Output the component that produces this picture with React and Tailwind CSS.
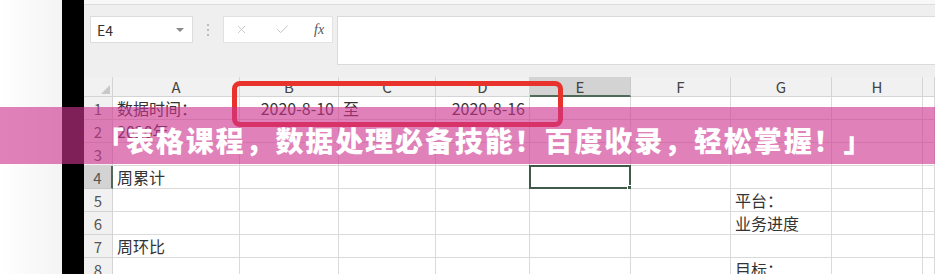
import React from "react";
import { X, Check } from "lucide-react";

const cols = ["A", "B", "C", "D", "E", "F", "G", "H", ""];

const data = {
  1: { A: "数据时间：", B: "2020-8-10", C: "至", D: "2020-8-16" },
  2: { A: "2020年" },
  4: { A: "周累计" },
  5: { G: "平台：" },
  6: { G: "业务进度" },
  7: { A: "周环比" },
  8: { G: "目标：" },
};

const rightAligned = { B: true, D: true };

export default function App() {
  const rows = [1, 2, 3, 4, 5, 6, 7, 8];
  return (
    <div
      className="relative w-[935px] h-[274px] overflow-hidden flex bg-white"
      style={{ fontFamily: '"Noto Sans CJK SC", "Noto Sans", sans-serif' }}
    >
      <div className="w-[62px] shrink-0 bg-linear-to-r from-white to-[#f4f4f4]" />
      <div className="w-[22px] shrink-0 bg-black" />
      <div className="flex-1 flex flex-col bg-[#efefef] min-w-0">
        <div className="h-[5px] shrink-0 bg-[#f8f8f8] border-b border-[#dddddd]" />
        <div className="h-[72px] shrink-0 flex items-start pt-[11px] pl-[6px]">
          <div className="w-[103px] h-[27px] bg-white border border-[#dcdcdc] flex items-center justify-between pl-[6px] pr-[8px]">
            <span className="text-[14px] text-[#333] leading-none">E4</span>
            <span className="w-0 h-0 border-l-[4px] border-r-[4px] border-t-[4px] border-l-transparent border-r-transparent border-t-[#8a8a8a]" />
          </div>
          <div className="ml-[14px] mt-[8px] flex flex-col gap-[3px]">
            <span className="w-[2px] h-[2px] bg-[#bbbbbb]" />
            <span className="w-[2px] h-[2px] bg-[#bbbbbb]" />
            <span className="w-[2px] h-[2px] bg-[#bbbbbb]" />
          </div>
          <div className="ml-[14px] w-[110px] h-[27px] bg-white border border-[#e2e2e2] flex items-center pl-[11px]">
            <X size={13} strokeWidth={1.6} color="#c4c4c4" />
            <Check size={15} strokeWidth={1.6} color="#c4c4c4" className="ml-[27px]" />
            <span
              className="ml-[24px] text-[14px] italic text-[#555]"
              style={{ fontFamily: '"Liberation Serif", serif' }}
            >
              fx
            </span>
          </div>
          <div className="ml-[4px] flex-1 h-[49px] bg-white border border-[#dadada] border-r-0" />
        </div>
        <div className="grid grid-cols-[29px_127px_99px_97px_94px_101px_100px_101px_91px_1fr] grid-rows-[20px_repeat(8,23px)]">
          <div className="bg-[#f1f1f1] border-r border-b border-[#d4d4d4] flex items-end justify-end pr-[2px] pb-[2px]">
            <span className="w-0 h-0 border-l-[9px] border-b-[9px] border-l-transparent border-b-[#c8c8c8]" />
          </div>
          {cols.map((c, i) => (
            <div
              key={"h" + i}
              className={
                c === "E"
                  ? "bg-[#d3d3d3] border-r border-[#c8c8c8] border-b-2 border-b-[#4f6b58] flex items-center justify-center text-[15px] text-[#444] leading-none"
                  : "bg-[#f1f1f1] border-r border-b border-[#d4d4d4] flex items-center justify-center text-[15px] text-[#444] leading-none"
              }
            >
              {c}
            </div>
          ))}
          {rows.map((r) => (
            <React.Fragment key={r}>
              <div
                className={
                  r === 4
                    ? "bg-[#d3d3d3] border-r-2 border-r-[#4f6b58] border-b border-[#c8c8c8] flex items-center justify-center text-[15px] text-[#555] leading-none"
                    : "bg-[#f1f1f1] border-r border-b border-[#d4d4d4] flex items-center justify-center text-[15px] text-[#555] leading-none"
                }
              >
                {r}
              </div>
              {cols.map((c, i) => {
                const txt = data[r] && data[r][c];
                const sel = r === 4 && c === "E";
                return (
                  <div
                    key={r + "-" + i}
                    className={
                      "relative bg-white border-r border-b border-[#dadada] flex items-center text-[16px] text-[#333] leading-none whitespace-nowrap " +
                      (rightAligned[c] ? "justify-end pr-[4px]" : "pl-[4px]")
                    }
                  >
                    {txt}
                    {sel && (
                      <div className="absolute -left-[1px] -top-[1px] w-[102px] h-[24px] border-2 border-[#3f5a48]">
                        <div className="absolute -right-[4px] -bottom-[4px] w-[6px] h-[6px] bg-[#3f5a48] border border-white" />
                      </div>
                    )}
                  </div>
                );
              })}
            </React.Fragment>
          ))}
        </div>
      </div>

      <div className="absolute left-[232px] top-[81px] w-[331px] h-[46px] border-[5px] border-[#e8322c] rounded-[8px]" />

      <div className="absolute left-0 top-[107px] w-full h-[57px] bg-[rgba(205,51,144,0.62)] flex items-center pl-[96px] pt-[8px]">
        <span className="text-white font-black text-[28px] leading-none tracking-[1.9px] whitespace-nowrap">
          「表格课程，数据处理必备技能！百度收录，轻松掌握！」
        </span>
      </div>
    </div>
  );
}
